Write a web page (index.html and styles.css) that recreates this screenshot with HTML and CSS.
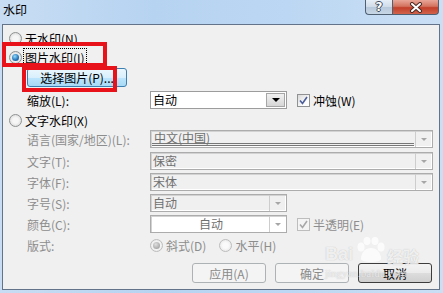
FILE: index.html
```html
<!DOCTYPE html>
<html lang="zh-CN">
<head>
  <meta charset="UTF-8">
  <title>水印</title>
  <link rel="stylesheet" href="styles.css">
</head>
<body>
  <div class="window">
    <div class="titlebar">
      <span class="title">水印</span>
      <div class="caption">
        <span class="cap-help">?</span>
        <span class="cap-close">
          <svg width="14" height="11" viewBox="0 0 14 11">
            <path d="M3 2 L11 9 M11 2 L3 9" stroke="#4a2a24" stroke-width="4" stroke-linecap="round"/>
            <path d="M3 2 L11 9 M11 2 L3 9" stroke="#fff" stroke-width="2" stroke-linecap="round"/>
          </svg>
        </span>
      </div>
    </div>

    <div class="client">
      <div class="row option first">
        <span class="radio"></span><span>无水印(N)</span>
      </div>
      <div class="row option sp5">
        <span class="radio on"></span><span class="focus">图片水印(I)</span>
      </div>
      <div class="row sp4 indent btn-row">
        <button type="button" class="btn btn-hot">选择图片(P)...</button>
      </div>
      <div class="row field sp4">
        <span class="label">缩放(L):</span>
        <div class="combo short live">
          <span class="value">自动</span><span class="drop"><i class="arrow"></i></span>
        </div>
        <span class="check">
          <svg width="9" height="9" viewBox="0 0 9 9"><path d="M1 4.5 L3.5 7.5 L8 1" fill="none" stroke="#4b5e9a" stroke-width="1.6"/></svg>
        </span>
        <span class="check-text">冲蚀(W)</span>
      </div>
      <div class="row option sp4">
        <span class="radio"></span><span>文字水印(X)</span>
      </div>
      <div class="row field dim">
        <span class="label">语言(国家/地区)(L):</span>
        <div class="combo wide lang">
          <span class="value">中文(中国)</span><span class="drop"><i class="arrow"></i></span>
        </div>
      </div>
      <div class="row field dim sp4">
        <span class="label">文字(T):</span>
        <div class="combo wide">
          <span class="value">保密</span><span class="drop"><i class="arrow"></i></span>
        </div>
      </div>
      <div class="row field dim">
        <span class="label">字体(F):</span>
        <div class="combo wide">
          <span class="value">宋体</span><span class="drop"><i class="arrow"></i></span>
        </div>
      </div>
      <div class="row field dim">
        <span class="label">字号(S):</span>
        <div class="combo short">
          <span class="value">自动</span><span class="drop"><i class="arrow"></i></span>
        </div>
      </div>
      <div class="row field dim">
        <span class="label">颜色(C):</span>
        <div class="combo short white">
          <span class="value center">自动</span><span class="drop"><i class="arrow"></i></span>
        </div>
        <span class="check off">
          <svg width="9" height="9" viewBox="0 0 9 9"><path d="M1 4.5 L3.5 7.5 L8 1" fill="none" stroke="#a8a8a8" stroke-width="1.6"/></svg>
        </span>
        <span class="check-text">半透明(E)</span>
      </div>
      <div class="row field dim option sp5">
        <span class="label">版式:</span>
        <span class="radio off on"></span><span class="radio-text">斜式(D)</span>
        <span class="radio off"></span><span>水平(H)</span>
      </div>
      <div class="row actions">
        <button type="button" class="btn" disabled>应用(A)</button>
        <button type="button" class="btn" disabled>确定</button>
        <button type="button" class="btn default">取消</button>
      </div>
    </div>

    <div class="mark mark-radio"></div>
    <div class="mark mark-button"></div>

    <div class="stamp">
      <span class="stamp-bai">Bai</span>
      <svg class="stamp-paw" width="32" height="26" viewBox="0 0 32 26">
        <ellipse cx="6" cy="10" rx="3.5" ry="4.5" />
        <ellipse cx="12" cy="4" rx="3.5" ry="4" />
        <ellipse cx="20" cy="4" rx="3.5" ry="4" />
        <ellipse cx="26" cy="10" rx="3.5" ry="4.5" />
        <path d="M6 22 C6 14 12 11 16 11 C20 11 26 14 26 22 C26 26 6 26 6 22 Z" />
      </svg>
      <span class="stamp-cn">经验</span>
      <span class="stamp-url">jingyan.baidu.com</span>
    </div>
  </div>
</body>
</html>
```

FILE: styles.css
```css
body {
  margin: 0;
  font-family: "Noto Sans CJK SC", "Liberation Sans", sans-serif;
  font-size: 12px;
  color: #000;
}
.window {
  position: relative;
  width: 443px;
  height: 293px;
  overflow: hidden;
  background: linear-gradient(90deg, #c8ddf3, #b6d3f1 35%, #bcd7f3 65%, #cadff4);
}
.titlebar {
  height: 24px;
  display: flex;
  justify-content: space-between;
  align-items: flex-start;
}
.title {
  margin: 3px 0 0 3px;
  line-height: 14px;
}
.caption {
  display: flex;
  margin-right: 4px;
}
.cap-help,
.cap-close {
  height: 14px;
  border: 1px solid #4f6073;
  border-top: none;
  display: flex;
  align-items: center;
  justify-content: center;
}
.cap-help {
  width: 26px;
  border-right: none;
  border-radius: 0 0 0 4px;
  background: linear-gradient(#e6eef7, #cfdbe8 50%, #b7c8db 51%, #c8d7e6);
  color: #fff;
  font: bold 12px "DejaVu Sans", sans-serif;
  text-shadow: 1px 0 0 #3f4b5a, -1px 0 0 #3f4b5a, 0 1px 0 #3f4b5a, 0 -1px 0 #3f4b5a;
}
.cap-close {
  width: 45px;
  border-radius: 0 0 4px 0;
  background: linear-gradient(#e9a698, #d3735f 45%, #c23f2a 55%, #d2634c);
}
.client {
  box-sizing: border-box;
  height: 266px;
  margin: 0 3px 0 2px;
  border: 1px solid #63748a;
  background: #f0f0f0;
  padding: 6px 6px 0 6px;
  display: flex;
  flex-direction: column;
}
.row {
  display: flex;
  align-items: center;
  height: 18px;
  margin-top: 3px;
  white-space: nowrap;
}
.option {
  height: 14px;
}
.first {
  margin-top: 0;
}
.sp4 {
  margin-top: 4px;
}
.sp5 {
  margin-top: 5px;
}
.indent,
.field {
  padding-left: 18px;
}
.btn-row {
  height: 19px;
}
.label {
  width: 123px;
  flex: none;
}
.dim {
  color: #8d8d8d;
}
.focus {
  outline: 1px dotted #000;
  outline-offset: 0;
  padding: 0 1px;
  margin-left: -1px;
}

/* radio buttons */
.radio {
  width: 13px;
  height: 13px;
  box-sizing: border-box;
  flex: none;
  margin-right: 3px;
  border-radius: 50%;
  border: 1px solid #8f9192;
  background: radial-gradient(circle at 50% 50%, #f6f6f6 35%, #d6d6d6 90%);
  display: flex;
  align-items: center;
  justify-content: center;
}
.radio.on::after {
  content: "";
  width: 7px;
  height: 7px;
  border-radius: 50%;
  background: radial-gradient(circle at 40% 35%, #94dcfc, #2a79bd 55%, #103e6b);
}
.radio.off {
  border-color: #bdbdbd;
  background: radial-gradient(circle at 50% 50%, #fafafa 35%, #e4e4e4 90%);
}
.radio.off.on::after {
  background: radial-gradient(circle at 40% 35%, #e0e0e0, #a9a9a9 70%);
}
.radio-text {
  margin-right: 13px;
}

/* check boxes */
.check {
  width: 13px;
  height: 13px;
  box-sizing: border-box;
  flex: none;
  margin-left: 10px;
  border: 1px solid #8f9192;
  background: linear-gradient(135deg, #d9d9d9, #fdfdfd 70%);
  display: flex;
  align-items: center;
  justify-content: center;
}
.check.off {
  border-color: #bdbdbd;
  background: #f4f4f4;
}
.check-text {
  margin-left: 3px;
}

/* combo boxes */
.combo {
  display: flex;
  height: 18px;
  box-sizing: border-box;
  border: 1px solid #acacac;
  box-shadow: inset 1px 1px 0 #d2d2d2, inset -1px -1px 0 #fff;
  background: #f0f0f0;
  color: #6f6f6f;
}
.wide {
  flex: 1;
}
.short {
  width: 137px;
  flex: none;
}
.white {
  background: #fff;
}
.value {
  flex: 1;
  padding-left: 2px;
  line-height: 15px;
}
.value.center {
  text-align: center;
}
.lang .value {
  margin: 1px 1px 1px 1px;
  line-height: 12px;
  border-bottom: 3px double #777;
}
.drop {
  width: 16px;
  flex: none;
  border-left: 1px solid #cdcdcd;
  display: flex;
  align-items: center;
  justify-content: center;
}
.arrow {
  width: 0;
  height: 0;
  border-left: 3px solid transparent;
  border-right: 3px solid transparent;
  border-top: 3px solid #a6a6a6;
}
.combo.live {
  background: #fff;
  color: #000;
  border-color: #9c9c9c;
  box-shadow: none;
}
.combo.live .drop {
  width: 17px;
  margin: 1px;
  border: 1px solid #a6a6a6;
  background: linear-gradient(#f1f1f1, #d6d6d6);
}
.combo.live .arrow {
  border-left-width: 4px;
  border-right-width: 4px;
  border-top: 4px solid #000;
}

/* push buttons */
.btn {
  width: 74px;
  height: 20px;
  padding: 0;
  border: 1px solid #707070;
  border-radius: 3px;
  background: linear-gradient(#f3f3f3, #ebebeb 50%, #dddddd 51%, #cfcfcf);
  font: inherit;
  color: #000;
}
.btn:disabled {
  border-color: #adb2b5;
  background: #f4f4f4;
  color: #8a8a8a;
}
.btn.default {
  border-color: #3d3d3d;
}
.btn-hot {
  width: 100px;
  height: 19px;
  border-color: #3c7fb1;
  background: linear-gradient(#eaf6fd, #d9f0fc 50%, #bee6fd 51%, #a7d9f5);
}
.actions {
  height: 20px;
  margin-top: 11px;
  justify-content: flex-end;
  gap: 9px;
  padding-right: 1px;
}

/* red annotation boxes */
.mark {
  position: absolute;
  box-sizing: border-box;
  border: 4px solid #e8121a;
  pointer-events: none;
}
.mark-radio {
  left: 2px;
  top: 42px;
  width: 105px;
  height: 25px;
}
.mark-button {
  left: 22px;
  top: 66px;
  width: 95px;
  height: 26px;
}

/* site watermark */
.stamp {
  position: absolute;
  left: 325px;
  top: 236px;
  width: 100px;
  height: 48px;
  pointer-events: none;
  color: rgba(255, 255, 255, 0.8);
  text-shadow: 0 0 1px rgba(120, 120, 120, 0.5);
}
.stamp-bai {
  position: absolute;
  left: 0;
  top: 8px;
  font: bold 18px "Liberation Sans", sans-serif;
}
.stamp-paw {
  position: absolute;
  left: 30px;
  top: 1px;
  fill: rgba(255, 255, 255, 0.75);
}
.stamp-cn {
  position: absolute;
  left: 62px;
  top: 8px;
  font: bold 16px "Noto Sans CJK SC", sans-serif;
}
.stamp-url {
  position: absolute;
  left: 0;
  top: 31px;
  font: 11px "Liberation Serif", serif;
  color: rgba(255, 255, 255, 0.7);
}
```
